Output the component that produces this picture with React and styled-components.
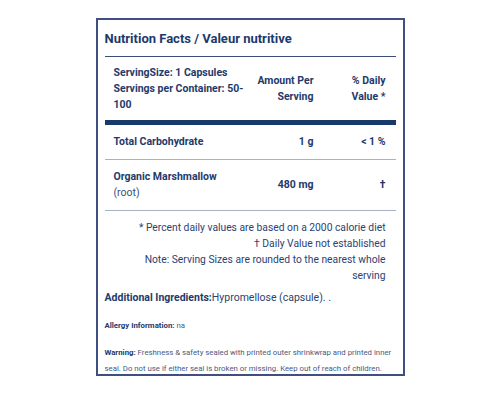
import React from 'react'
import styled, { createGlobalStyle } from 'styled-components'

const GlobalStyle = createGlobalStyle`
  body {
    margin: 0;
    background: #ffffff;
    font-family: Roboto, "Liberation Sans", sans-serif;
    color: #1e3a6b;
  }
`

const rows = [
    { name: 'Total Carbohydrate', sub: null, amount: '1 g', dv: '< 1 %' },
    { name: 'Organic Marshmallow', sub: '(root)', amount: '480 mg', dv: '†' },
]

function App() {
    return (
        <Page>
            <GlobalStyle />
            <Panel>
                <Title>Nutrition Facts / Valeur nutritive</Title>
                <Table>
                    <HeadRow>
                        <NameCell>
                            ServingSize: 1 Capsules<br />
                            Servings per Container: 50-<wbr />100
                        </NameCell>
                        <NumCell>Amount Per Serving</NumCell>
                        <NumCell>% Daily Value *</NumCell>
                    </HeadRow>
                    {rows.map((r) => (
                        <Row key={r.name}>
                            <NameCell>
                                {r.name}
                                {r.sub && <Sub>{r.sub}</Sub>}
                            </NameCell>
                            <NumCell>{r.amount}</NumCell>
                            <NumCell>{r.dv}</NumCell>
                        </Row>
                    ))}
                </Table>
                <Notes>
                    <div>* Percent daily values are based on a 2000 calorie diet</div>
                    <div>† Daily Value not established</div>
                    <div>Note: Serving Sizes are rounded to the nearest whole serving</div>
                </Notes>
                <Ingredients>
                    <b>Additional Ingredients:</b>Hypromellose (capsule). .
                </Ingredients>
                <Small $gap={12}>
                    <b>Allergy Information:</b> na
                </Small>
                <Small $gap={11}>
                    <b>Warning:</b> Freshness &amp; safety sealed with printed outer shrinkwrap and printed inner seal. Do not use if either seal is broken or missing. Keep out of reach of children.
                </Small>
            </Panel>
        </Page>
    )
}

export default App

const Page = styled.div`
    width: 500px;
    height: 400px;
    padding-top: 18px;
    box-sizing: border-box;
    display: flex;
    justify-content: center;
    align-items: flex-start;
`

const Panel = styled.div`
    width: 309px;
    height: 358px;
    box-sizing: border-box;
    border: 2px solid #3f5080;
    padding: 0 7px 0 7px;
`

const Title = styled.div`
    font-size: 13px;
    line-height: 15px;
    font-weight: 700;
    color: #1c3a6c;
    padding: 11px 0 10px 0;
    border-bottom: 1.5px solid #3b4d78;
`

const Table = styled.div`
    display: flex;
    flex-direction: column;
`

const Row = styled.div`
    display: grid;
    grid-template-columns: 149px 70px 72px;
    align-items: center;
    font-size: 10.5px;
    line-height: 16px;
    font-weight: 700;
    color: #1e3a6b;
    padding: 9px 0;
    border-bottom: 1px solid #a6b2c8;
`

const HeadRow = styled(Row)`
    padding: 8px 0 7px 0;
    border-bottom: 5px solid #173a6b;
`

const NameCell = styled.div`
    padding-left: 9px;
`

const NumCell = styled.div`
    text-align: right;
    padding-right: 10px;
`

const Sub = styled.div`
    font-weight: 400;
    color: #3d5078;
`

const Notes = styled.div`
    text-align: right;
    font-size: 10.3px;
    line-height: 16px;
    color: #2c4272;
    padding: 9px 10px 0 20px;
`

const Ingredients = styled.div`
    font-size: 10.5px;
    line-height: 16px;
    color: #2c4272;
    margin-top: 6px;
    b {
        color: #1e3a6b;
    }
`

const Small = styled.div`
    font-size: 7.8px;
    line-height: 16px;
    color: #4a5a80;
    margin-top: ${(p) => p.$gap}px;
    b {
        color: #1e3a6b;
    }
`
